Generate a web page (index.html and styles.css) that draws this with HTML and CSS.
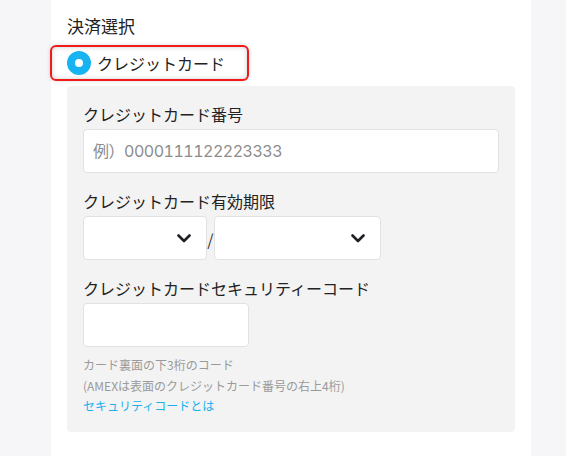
FILE: index.html
```html
<!DOCTYPE html>
<html lang="ja">
<head>
<meta charset="utf-8">
<link rel="stylesheet" href="styles.css">
</head>
<body>
<div class="page">
  <div class="column">
    <h2 class="heading">決済選択</h2>
    <label class="radio-box"><span class="radio"></span><span class="radio-text">クレジットカード</span></label>
    <div class="panel">
      <div class="field">
        <div class="label">クレジットカード番号</div>
        <input class="input input-wide" type="text" placeholder="例）0000111122223333">
      </div>
      <div class="field">
        <div class="label">クレジットカード有効期限</div>
        <div class="expiry">
          <div class="select select-month">
            <svg class="chev" width="14" height="9" viewBox="0 0 14 9"><path d="M1.5 1.5 L7 7 L12.5 1.5" fill="none" stroke="#1f1f24" stroke-width="2.6" stroke-linecap="round" stroke-linejoin="round"/></svg>
          </div>
          <span class="slash">/</span>
          <div class="select select-year">
            <svg class="chev" width="14" height="9" viewBox="0 0 14 9"><path d="M1.5 1.5 L7 7 L12.5 1.5" fill="none" stroke="#1f1f24" stroke-width="2.6" stroke-linecap="round" stroke-linejoin="round"/></svg>
          </div>
        </div>
      </div>
      <div class="field">
        <div class="label">クレジットカードセキュリティーコード</div>
        <input class="input input-code" type="text">
        <div class="note">
          <div>カード裏面の下3桁のコード</div>
          <div>(AMEXは表面のクレジットカード番号の右上4桁)</div>
          <a class="link" href="#">セキュリティコードとは</a>
        </div>
      </div>
    </div>
  </div>
</div>
</body>
</html>
```

FILE: styles.css
```css
* { box-sizing: border-box; }
html, body { margin: 0; padding: 0; }
body {
  background: #f6f6f8;
  font-family: "Noto Sans CJK JP", "Noto Sans", sans-serif;
  color: #222;
  height: 456px;
  overflow: hidden;
}
.page {
  display: flex;
  height: 456px;
}
.column {
  margin-left: 51px;
  width: 480px;
  background: #fff;
  padding: 13px 16px 0;
  display: flex;
  flex-direction: column;
  align-items: flex-start;
}
.heading {
  margin: 0;
  font-size: 17px;
  font-weight: 400;
  line-height: 26px;
  color: #222;
}
.radio-box {
  margin: 6px 0 0 -17px;
  width: 199px;
  height: 36px;
  border: 2px solid #f01a1a;
  border-radius: 6px;
  box-shadow: inset 0 0 5px rgba(0,0,0,0.2), 0 0 4px rgba(0,0,0,0.15);
  display: flex;
  align-items: center;
  padding-left: 15px;
  gap: 6px;
}
.radio {
  width: 24px;
  height: 24px;
  border-radius: 50%;
  border: 8px solid #18b4f2;
  background: #fff;
  flex: none;
}
.radio-text {
  font-size: 16px;
  line-height: 24px;
  color: #222;
}
.panel {
  margin-top: 5px;
  width: 448px;
  height: 346px;
  background: #f3f3f3;
  border-radius: 4px;
  padding: 16px 16px 0;
  display: flex;
  flex-direction: column;
  gap: 16px;
}
.field {
  display: flex;
  flex-direction: column;
  align-items: flex-start;
}
.label {
  font-size: 16px;
  line-height: 24px;
  margin-bottom: 3px;
  color: #222;
}
.input {
  height: 44px;
  border: 1px solid #e2e2e2;
  border-radius: 4px;
  background: #fff;
  font-family: "Inter", "Noto Sans CJK JP", sans-serif;
  font-variant-numeric: tabular-nums;
  font-feature-settings: "tnum" 1;
  letter-spacing: -0.5px;
  font-size: 16px;
  padding: 0 9px;
  outline: none;
}
.input-wide { width: 416px; }
.input-code { width: 166px; }
.input::placeholder { color: #8c8c8c; }
.expiry {
  display: flex;
  align-items: center;
}
.select {
  height: 44px;
  border: 1px solid #e2e2e2;
  border-radius: 4px;
  background: #fff;
  display: flex;
  align-items: center;
  justify-content: flex-end;
  padding-right: 15px;
}
.select-month { width: 124px; }
.select-year { width: 167px; }
.slash {
  width: 7px;
  text-align: center;
  font-size: 16px;
  color: #333;
  padding-top: 2px;
}
.chev { display: block; }
.note {
  margin-top: 8px;
  font-size: 12px;
  line-height: 20.5px;
  color: #9a9a9a;
}
.link {
  color: #1ab1ef;
  text-decoration: none;
}
```
